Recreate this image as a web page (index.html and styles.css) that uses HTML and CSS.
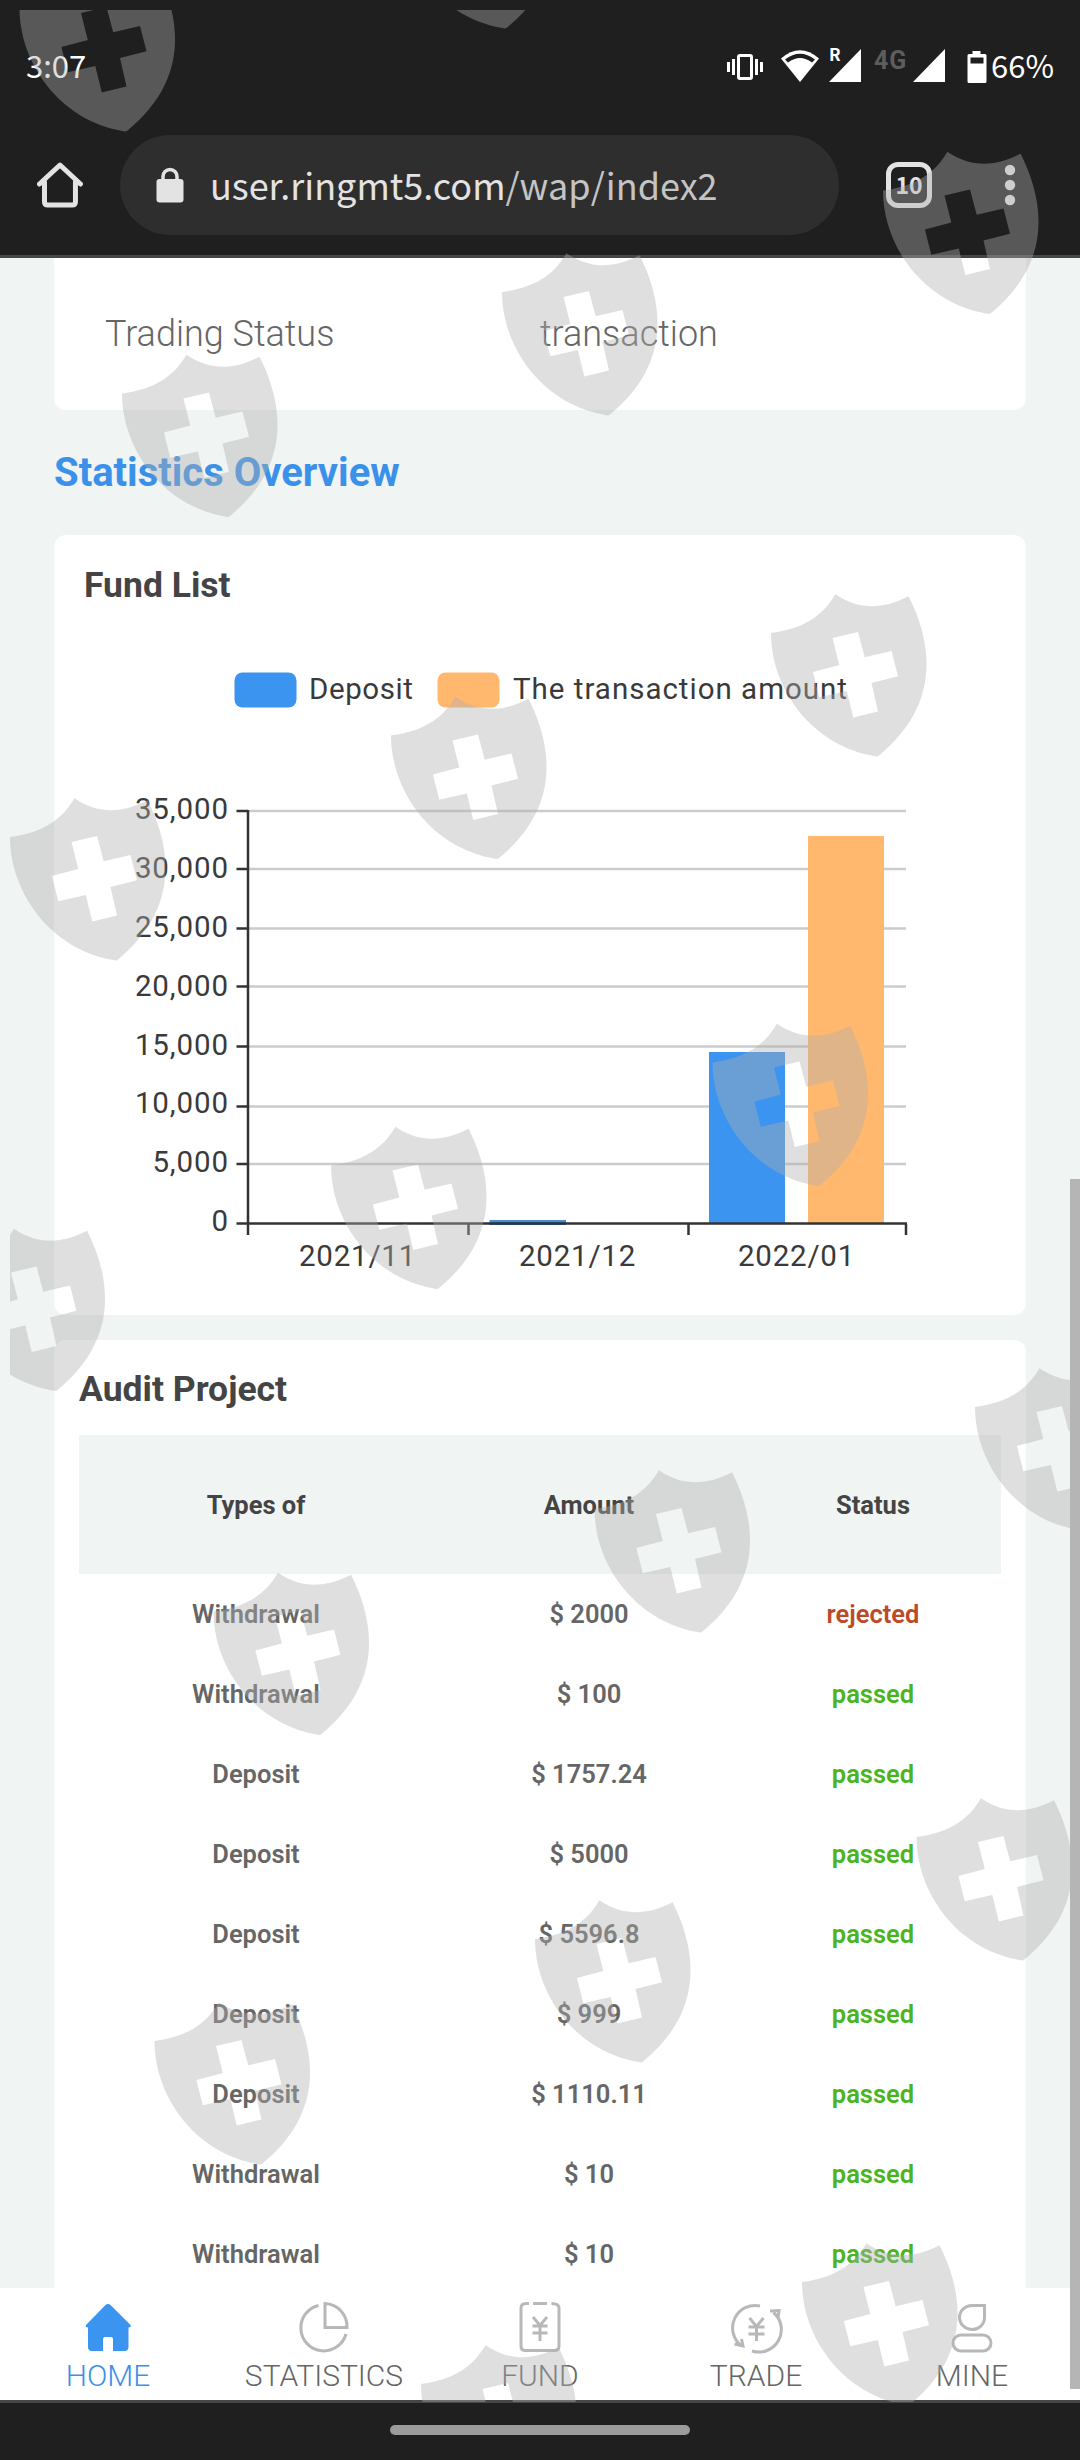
FILE: index.html
```html
<!DOCTYPE html>
<html lang="en">
<head>
  <meta charset="UTF-8" />
  <title>Statistics Overview</title>
  <meta name="viewport" content="width=device-width, initial-scale=1" />
  <link rel="stylesheet" href="styles.css">
</head>
<body>
  <div class="screen">
    <!-- Status bar -->
    <div class="status-bar">
      <span class="clock">3:07</span>
      <div class="status-icons">
        <svg class="vibrate" width="36" height="26" viewBox="0 0 36 26" fill="none" stroke="#fff">
          <rect x="11.5" y="1.5" width="13" height="23" rx="1.5" stroke-width="3" />
          <path d="M1.5 8v10M34.500 8v10M6.500 5v16M29.500 5v16" stroke-width="3" />
        </svg>
        <svg class="wifi" width="38" height="32" viewBox="0 0 38 32">
          <path d="M0 8.500Q19-8 38 8.500L19 32z" fill="#fff" />
          <path d="M4 9.500Q19-2 34 9.500L31 12.500Q19 3.500 7 12.500z" fill="#1f1f1f" />
        </svg>
        <svg class="signal-r" width="33" height="36" viewBox="0 0 33 36">
          <path d="M0 36L32 3v33z" fill="#fff" />
          <text x="0" y="15" class="roaming">R</text>
        </svg>
        <span class="network">4G</span>
        <svg class="signal" width="32" height="34" viewBox="0 0 32 34">
          <path d="M0 34L32 1v33z" fill="#fff" />
        </svg>
        <svg class="battery" width="20" height="32" viewBox="0 0 20 32">
          <path d="M5.500 0h8v3H18q1.500 0 1.500 1.500v26q0 1.500-1.500 1.500H2q-1.500 0-1.500-1.500v-26Q.5 3 2 3h3.500z" fill="#fff" />
          <path d="M3.500 6.500h13v6h-13z" fill="#1f1f1f" />
        </svg>
        <span class="percent">66%</span>
      </div>
    </div>

    <!-- Browser toolbar -->
    <div class="toolbar">
      <svg class="home-btn" width="46" height="46" viewBox="0 0 46 46" fill="none" stroke="#e3e3e3" stroke-width="5" stroke-linejoin="round" stroke-linecap="round">
        <path d="M2.500 22L23 3l20.500 19" />
        <path d="M7.500 20v20q0 3 3 3h25q3 0 3-3V20" />
      </svg>
      <div class="url">
        <svg class="lock" width="28" height="36" viewBox="0 0 28 36">
          <path d="M7 15V9.500a7 7 0 0 1 14 0V15" fill="none" stroke="#e3e3e3" stroke-width="3.500" />
          <rect x="0.500" y="12" width="27" height="23.500" rx="3" fill="#e3e3e3" />
        </svg>
        <span class="address">user.ringmt5.com<span>/wap/index2</span></span>
      </div>
      <div class="tabs-btn">10</div>
      <svg class="menu-btn" width="12" height="42" viewBox="0 0 12 42" fill="#e3e3e3">
        <circle cx="6" cy="6" r="5.200" /><circle cx="6" cy="21" r="5.200" /><circle cx="6" cy="36" r="5.200" />
      </svg>
    </div>

    <!-- Page -->
    <main class="page">
      <section class="card account">
        <span class="label">Trading Status</span>
        <span class="value">transaction</span>
      </section>

      <h2>Statistics Overview</h2>

      <section class="card fund">
        <h3>Fund List</h3>
        <svg class="chart" width="972" height="700" viewBox="54 615 972 700">
          <rect x="234.500" y="672.500" width="62" height="35" rx="8" fill="#3b94ef" />
          <text x="309" y="699" textLength="104">Deposit</text>
          <rect x="437.500" y="672.500" width="62" height="35" rx="8" fill="#ffb86e" />
          <text x="513" y="699" textLength="334">The transaction amount</text>

          <path class="grid" d="M249 811h657M249 869h657M249 928.500h657M249 986.500h657M249 1046.500h657M249 1106.500h657M249 1164h657" />

          <g class="y-labels">
            <text x="229" y="819">35,000</text>
            <text x="229" y="878">30,000</text>
            <text x="229" y="937">25,000</text>
            <text x="229" y="996">20,000</text>
            <text x="229" y="1055">15,000</text>
            <text x="229" y="1113">10,000</text>
            <text x="229" y="1172">5,000</text>
            <text x="229" y="1231">0</text>
          </g>

          <rect x="489.500" y="1220" width="76.500" height="4" fill="#4c8bd0" />
          <rect x="709" y="1052" width="76" height="171" fill="#3b94ef" />
          <rect x="808" y="836" width="76" height="387" fill="#ffb86e" />

          <path class="axis" d="M248 810v425M236.500 811H248M236.500 869H248M236.500 928.500H248M236.500 986.500H248M236.500 1046.500H248M236.500 1106.500H248M236.500 1164H248M236.500 1223.500H907M468.500 1224v11M688.500 1224v11M906 1224v11" />
          <path d="M489.500 1223.700H566" stroke="#17375c" stroke-width="2" />

          <g class="x-labels">
            <text x="357.500" y="1266">2021/11</text>
            <text x="577.500" y="1266">2021/12</text>
            <text x="796.500" y="1266">2022/01</text>
          </g>
        </svg>
      </section>

      <section class="card audit">
        <h3>Audit Project</h3>
        <table>
          <thead>
            <tr><th>Types of</th><th>Amount</th><th>Status</th></tr>
          </thead>
          <tbody>
            <tr><td>Withdrawal</td><td>$ 2000</td><td class="rejected">rejected</td></tr>
            <tr><td>Withdrawal</td><td>$ 100</td><td class="passed">passed</td></tr>
            <tr><td>Deposit</td><td>$ 1757.24</td><td class="passed">passed</td></tr>
            <tr><td>Deposit</td><td>$ 5000</td><td class="passed">passed</td></tr>
            <tr><td>Deposit</td><td>$ 5596.8</td><td class="passed">passed</td></tr>
            <tr><td>Deposit</td><td>$ 999</td><td class="passed">passed</td></tr>
            <tr><td>Deposit</td><td>$ 1110.11</td><td class="passed">passed</td></tr>
            <tr><td>Withdrawal</td><td>$ 10</td><td class="passed">passed</td></tr>
            <tr><td>Withdrawal</td><td>$ 10</td><td class="passed">passed</td></tr>
          </tbody>
        </table>
      </section>
    </main>

    <!-- Bottom tabs -->
    <nav class="tab-bar">
      <a class="active">
        <svg width="48" height="50" viewBox="0 0 48 50">
          <path d="M24 1q1.500 0 2.500 1L46.500 22q1 2.500-2 2.500V44q0 4-4 4H29V36q0-2-2-2h-6q-2 0-2 2v12H8q-4 0-4-4V24.500q-3 0-2-2.500L21.500 2q1-1 2.500-1z" fill="#3b94ef" />
        </svg>
        HOME
      </a>
      <a>
        <svg width="48" height="50" viewBox="0 0 48 50">
          <path d="M18.500 2.500A23 23 0 1 0 46 31" />
          <path d="M25 0.500v24h22A23 23 0 0 0 25 0.500z" />
        </svg>
        STATISTICS
      </a>
      <a>
        <svg width="48" height="50" viewBox="0 0 48 50">
          <path d="M13 0.500H10Q5 0.500 5 5v38q0 4.500 4.500 4.500h29q4.500 0 4.500-4.500V5q0-4.500-7.500-4.500M17 0.500h14" />
          <path class="yen" d="M17 14l7 8.500 7-8.500M16.500 23h15M16.500 30h15M24 22.500V38" />
        </svg>
        FUND
      </a>
      <a>
        <svg width="48" height="50" viewBox="0 0 48 50">
          <path d="M28 3A22.500 22.500 0 0 0 9 42.500M2.500 41l8.500 2-1.500-7M41.500 9.500A22.500 22.500 0 0 1 20 48M46 15l1-7.500-9 .5" />
          <path class="yen" d="M17.500 15l7 8.500 7-8.500M16.500 24h16M16.500 31h16M24.500 23.500V38" />
        </svg>
        TRADE
      </a>
      <a>
        <svg width="48" height="50" viewBox="0 0 48 50">
          <path d="M24 2.500h12.500V15A12.500 12 0 1 1 24 2.500z" />
          <rect x="5" y="32" width="38" height="16" rx="8" />
        </svg>
        MINE
      </a>
    </nav>
    <div class="scrollbar"></div>

    <!-- Gesture bar -->
    <div class="gesture-bar"><i></i></div>

    <!-- Shield watermark -->
    <svg class="watermark" viewBox="10 10 1060 2392">
      <defs>
        <path id="shield" fill-rule="evenodd" d="M0 0C29-4 50-14 64.400-38.700C90-22 112-24 137.600-36.700C160 8 172 70 108 122.500Q106 124 103 123C40 112 0 55 0 0z
          M61.500 5L87 -1L93.700 24.300L120.500 18L127 43.300L100.500 50L107 78.500L82.300 84.500L75.800 58L48.300 64.300L41.900 39L68.300 32z" />
      </defs>
      <use href="#shield" x="19.500" y="8" />
      <use href="#shield" x="399" y="-95" />
      <use href="#shield" x="122" y="393.500" />
      <use href="#shield" x="502" y="292" />
      <use href="#shield" x="883" y="190.500" />
      <use href="#shield" x="10" y="837" />
      <use href="#shield" x="391" y="735.500" />
      <use href="#shield" x="771" y="633" />
      <use href="#shield" x="-50.500" y="1267.500" />
      <use href="#shield" x="331" y="1165.500" />
      <use href="#shield" x="712.500" y="1062.500" />
      <use href="#shield" x="213.500" y="1611.500" />
      <use href="#shield" x="594.500" y="1509" />
      <use href="#shield" x="975" y="1407" />
      <use href="#shield" x="154.500" y="2041" />
      <use href="#shield" x="535" y="1939" />
      <use href="#shield" x="916.500" y="1837" />
      <use href="#shield" x="421" y="2384" />
      <use href="#shield" x="802" y="2282" />
    </svg>
  </div>
</body>
</html>
```
FILE: styles.css
```css
* {
  box-sizing: border-box;
}

body {
  margin: 0;
  background: #1f1f1f;
  font-family: Roboto, sans-serif;
}

.screen {
  position: relative;
  width: 1080px;
  height: 2460px;
  display: flex;
  flex-direction: column;
  overflow: hidden;
}

/* status bar */
.status-bar {
  height: 135px;
  padding: 45px 26px 0 26px;
  display: flex;
  justify-content: space-between;
  align-items: flex-start;
  background: #1f1f1f;
  color: #fff;
  font-family: "Noto Sans CJK SC", sans-serif;
}

.clock, .percent {
  font-size: 31px;
  line-height: 40px;
}

.status-icons {
  display: flex;
  align-items: flex-start;
}

.vibrate {
  margin: 9px 18px 0 0;
}

.wifi {
  margin: 5px 10px 0 0;
}

.signal-r {
  margin: 1px 12px 0 0;
}

.roaming {
  font: 700 17px "Noto Sans CJK SC", sans-serif;
  fill: #fff;
}

.network {
  width: 39px;
  color: #5d5d5d;
  font: 700 25px/32px Roboto, sans-serif;
  letter-spacing: 1px;
}

.signal {
  margin: 3px 22px 0 0;
}

.battery {
  margin: 6px 4px 0 0;
}

/* browser toolbar */
.toolbar {
  height: 123px;
  padding: 0 64px 20px 37px;
  display: flex;
  align-items: center;
  background: #1f1f1f;
  border-bottom: 3px solid #444746;
}

.url {
  width: 720px;
  height: 100px;
  margin: 0 47px 0 37px;
  padding-left: 36px;
  display: flex;
  align-items: center;
  border-radius: 50px;
  background: #2e2e2e;
}

.address {
  margin: -3px 0 0 26px;
  color: #e3e3e3;
  font: 36px/54px "Noto Sans CJK SC", sans-serif;
}

.address span {
  color: #c4c4c4;
}

.tabs-btn {
  width: 46px;
  height: 46px;
  margin-right: 72px;
  border: 5px solid #e3e3e3;
  border-radius: 12px;
  color: #e3e3e3;
  font: 700 23px/34px "Noto Sans CJK SC", sans-serif;
  text-align: center;
}

/* page */
.page {
  flex: 1;
  min-height: 0;
  padding: 0 54px;
  overflow: hidden;
  background: #f0f4f3;
}

.card {
  background: #fff;
  border-radius: 12px;
}

.account {
  height: 152px;
  padding: 54px 51px 0;
  display: flex;
  border-radius: 0 0 12px 12px;
  color: #666;
  font-size: 36px;
  font-weight: 300;
  line-height: 44px;
}

.account .label {
  width: 435px;
}

h2 {
  margin: 37px 0 36px;
  color: #3b91ea;
  font-size: 40px;
  line-height: 52px;
}

h3 {
  margin: 0;
  color: #444;
  font-size: 35.500px;
  line-height: 40px;
}

.fund {
  height: 780px;
  padding-top: 30px;
}

.fund h3 {
  padding-left: 30px;
}

.chart {
  display: block;
  margin-top: 10px;
}

.chart text {
  font-size: 29.500px;
  fill: #3a3a3a;
}

.grid {
  stroke: #ccc;
  stroke-width: 2.500;
}

.axis {
  fill: none;
  stroke: #333;
  stroke-width: 2.500;
}

.y-labels {
  text-anchor: end;
  letter-spacing: 0.900px;
}

.x-labels {
  text-anchor: middle;
  letter-spacing: 0.800px;
}

.audit {
  height: 1100px;
  margin-top: 25px;
  padding: 29px 25px 0;
}

.audit h3 {
  margin-bottom: 26px;
}

table {
  width: 922px;
  table-layout: fixed;
  border-collapse: collapse;
  font-size: 25.500px;
  font-weight: 600;
  text-align: center;
}

th {
  height: 139px;
  padding: 0;
  background: #f0f4f3;
  color: #444;
}

th:nth-child(1) {
  width: 354px;
}

th:nth-child(2) {
  width: 312px;
}

td {
  height: 80px;
  padding: 0;
  color: #666;
}

.passed {
  color: #4bb41e;
}

.rejected {
  color: #bd4a26;
}

/* bottom tabs */
.tab-bar {
  height: 112px;
  padding-top: 15px;
  display: flex;
  background: #fff;
}

.tab-bar a {
  flex: 1;
  display: flex;
  flex-direction: column;
  align-items: center;
  gap: 6px;
  color: #666;
  font-size: 30px;
  font-weight: 300;
  line-height: 34px;
}

.tab-bar .active {
  color: #3b91ea;
}

.tab-bar svg {
  fill: none;
  stroke: #b8b8b8;
  stroke-width: 3;
  overflow: visible;
}

.tab-bar .active svg {
  stroke: none;
}

.scrollbar {
  position: absolute;
  top: 1179px;
  right: 0;
  width: 10px;
  height: 1210px;
  background: #b5b5b5;
}

.gesture-bar {
  height: 60px;
  padding-bottom: 3px;
  display: flex;
  justify-content: center;
  align-items: center;
  background: #1f1f1f;
  border-top: 3px solid #444746;
}

.gesture-bar i {
  width: 300px;
  height: 10px;
  border-radius: 5px;
  background: #9b9b9b;
}

/* lies over the whole screen */
.watermark {
  position: absolute;
  top: 10px;
  left: 10px;
  width: 1060px;
  height: 2392px;
  fill: rgba(176, 176, 176, 0.4);
  pointer-events: none;
}
```
